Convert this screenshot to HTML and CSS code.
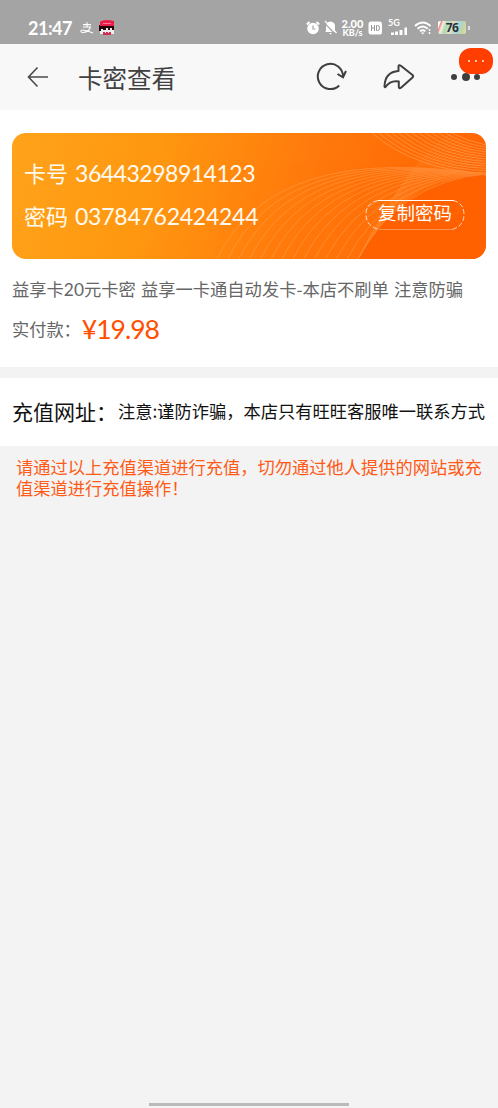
FILE: index.html
```html
<!DOCTYPE html>
<html lang="zh-CN">
<head>
<meta charset="utf-8">
<title>卡密查看</title>
<link rel="stylesheet" href="styles.css">
</head>
<body>
<div class="status">
  <span class="clock">21:47</span>
  <svg class="pay" width="14" height="12" viewBox="0 0 14 12" fill="none" stroke="#fff" stroke-width="1.1"><path d="M3 2.600h8M7 .3v4.500M3 5h7.500c-1 3-4 5.500-8 5.500-2 0-2.300-2.500 0-2.500 3 0 6 1.500 10.500 3"/></svg>
  <svg class="avatar" width="16" height="16" viewBox="0 0 16 16"><path fill="#eee" d="M1 8h14v6H1z"/><path fill="#26070c" d="M0 5h15v5h-2V8h-2v2H9V8H7v2H4V9H2v2H0z"/><path fill="#e91e4b" d="M2 1Q8-1 15 1v5H1V2z"/><path fill="#ff7595" d="M4 3h8v1H4z"/><path fill="#d52b50" d="M4 12h2v1h1v-1h2v1h1v-1h2v3H4z"/></svg>
  <span class="grow"></span>
  <svg class="alarm" width="14" height="14" viewBox="0 0 14 14"><circle cx="7" cy="7.500" r="5.800" fill="#fff"/><path d="M.8 3.500 3.500 1M13.200 3.500 10.500 1" stroke="#fff" stroke-width="2"/><path d="M7 4.500v3.500h2.500" fill="none" stroke="#a4a4a4" stroke-width="1.200"/></svg>
  <svg class="bell" width="13" height="15" viewBox="0 0 13 15"><path fill="#fff" d="M2 11V6q0-4 4.500-4.500Q11 2 11 6v5l1 1H1zM5 13h3l-1.500 1.500z"/><path d="M0 2.500 11 14" stroke="#a4a4a4" stroke-width="1.200"/><path d="M1 1 12.500 13" stroke="#fff" stroke-width="1.200"/></svg>
  <span class="speed"><b>2.00</b><b>KB/s</b></span>
  <svg class="hd" width="15" height="14" viewBox="0 0 15 14"><rect x=".5" y=".5" width="13.500" height="13" rx="2.500" fill="#fff"/><path d="M3.500 4v6M6.500 4v6M3.500 7h3M8.500 4.500h1q2 0 2 2.500t-2 2.500h-1z" fill="none" stroke="#999" stroke-width="1"/></svg>
  <span class="signal"><b>5G</b><svg width="22" height="16" viewBox="0 0 22 16" fill="#fff"><path d="M4 12.500h3V15H4zM8 11.500h3V15H8zM12.500 10h3v5h-3zM17.500 7.500h2.500V15h-2.500z"/></svg></span>
  <svg class="wifi" width="18" height="14" viewBox="0 0 18 14" fill="none" stroke="#fff" stroke-width="1.900"><path d="M1 5q8-7 15.500 0M3.500 7.700q5.200-4.600 10.300 0M6 10.300q2.700-2.300 5.400 0"/><path d="m7 11.500 1.700 2 1.700-2z" fill="#fff" stroke="none"/><path d="M15.500 8v2M15.500 11v2" stroke-width="1.500"/></svg>
  <span class="battery">76</span><i class="tip"></i>
</div>

<header class="nav">
  <svg class="back" width="22" height="22" viewBox="0 0 22 22" fill="none" stroke="#4b4b4b" stroke-width="1.600"><path d="M10.500 1.500 1.500 11l9 9.500M1.500 11H21"/></svg>
  <h1>卡密查看</h1>
  <svg class="reload" width="32" height="30" viewBox="0 0 32 30" fill="none" stroke="#3f3f3f" stroke-width="2"><path d="M23.200 23.500A12.600 12.600 0 1 1 27 14.500M21.500 12l5.500 3.300 3-6.300"/></svg>
  <svg class="share" width="32" height="28" viewBox="0 0 32 28" fill="none" stroke="#3f3f3f" stroke-width="2" stroke-linejoin="round"><path d="M15.500 3.500q.3-2 2-1L29.500 12q1.200 1.300 0 2.500L18 24.700q-2 1.300-2.200-.7V18.500C10 17.500 6 19 2.500 24q-1 .5-1-1C2 13 7 8.500 15.500 8z"/></svg>
  <div class="more"><i></i><i class="mid"></i><i></i><span class="badge"><i></i><i></i><i></i></span></div>
</header>

<main>
  <section class="order">
    <div class="card">
      <svg class="waves" width="474" height="126" viewBox="0 0 474 126" fill="none" aria-hidden="true">
        <path class="shade" d="M346 126Q387 49 474 41V126Z"/>
        <g id="arcs"></g><g id="fan"></g><g id="cross"></g>
      </svg>
      <div class="row"><span>卡号</span><span class="num">36443298914123</span></div>
      <div class="row"><span>密码</span><span class="num second">03784762424244</span></div>
      <button class="copy" type="button"><svg width="100" height="32" viewBox="0 0 100 32" fill="none" stroke="#fff"><path d="M13 1.500h76" stroke-width="1.200"/><path d="M13 1.500Q1 4 1 15.500T14 30.500M88 1.500Q99 4 99 15.500T87 30.500" stroke-width="1" stroke-dasharray="5 2" opacity=".75"/><path d="M14 30.500h73" opacity=".3"/></svg><span>复制密码</span></button>
    </div>
    <p class="product">益享卡<span class="lat">20</span>元卡密 益享一卡通自动发卡-本店不刷单 注意防骗</p>
    <p class="paid"><span>实付款：</span><strong>¥19.98</strong></p>
  </section>
  <section class="site"><span class="label">充值网址：</span><span class="notice">注意:谨防诈骗，本店只有旺旺客服唯一联系方式</span></section>
  <p class="warning">请通过以上充值渠道进行充值，切勿通过他人提供的网站或充<br>值渠道进行充值操作！</p>
</main>
<div class="home"></div>
<script src="waves.js"></script>
</body>
</html>
```
FILE: styles.css
```css
* { box-sizing: border-box; }
body { margin: 0; width: 498px; height: 1108px; overflow: hidden; display: flex; flex-direction: column; background: #f3f3f3; color: #111; font-family: "Noto Sans CJK SC", sans-serif; }
p, h1 { margin: 0; font-weight: 400; }
svg { display: block; flex: none; }
.status { height: 44px; flex: none; display: flex; align-items: center; padding: 11px 28px 0 28px; background: #a4a4a4; color: #fff; font-family: Lato, sans-serif; }
.clock { width: 52px; font-size: 18px; font-weight: 700; line-height: 20px; letter-spacing: -.5px; }
.avatar { margin-left: 5px; }
.grow { flex: 1; }
.bell { margin-left: 4px; }
.speed { width: 23px; margin-left: 4px; display: flex; flex-direction: column; font: 700 11px/9px Lato, sans-serif; text-align: center; white-space: nowrap; }
.speed b + b { font-size: 9px; }
.hd { margin-left: 4px; }
.signal { position: relative; margin-left: 4px; }
.signal b { position: absolute; left: 1px; top: -2px; font-size: 9px; line-height: 10px; }
.wifi { margin-left: 5px; }
.battery { width: 28px; height: 13px; margin-left: 6px; border-radius: 2px; background: linear-gradient(110deg, #fff 7%, #e98982 11%, #f7eedc 18%, #a9d9ba 30%, #e5dfbd 48%, #a9d4dd 68%, #c6d69b 87%, #e5dfbd); color: #27313d; font: 700 12px/13px "Open Sans", sans-serif; letter-spacing: -.6px; text-align: center; }
.tip { width: 2px; height: 4px; margin-left: 2px; background: #ddd; }
.nav { height: 66px; flex: none; display: flex; align-items: center; padding: 0 18px 0 27px; background: #f8f8f8; color: #414141; }
.nav h1 { width: 200px; margin-left: 29px; padding-top: 2px; font-size: 24.5px; line-height: 34px; }
.reload { margin-left: 38px; }
.share { margin-left: 35px; }
.more { position: relative; flex: none; display: flex; align-items: center; justify-content: space-between; width: 29px; height: 30px; margin-left: auto; }
.more > i { width: 6px; height: 6px; border-radius: 50%; background: #3f3f3f; }
.more > .mid { width: 8px; height: 8px; }
.badge { position: absolute; left: 8px; top: -14px; width: 34px; height: 26px; display: flex; align-items: center; justify-content: center; gap: 5px; border-radius: 12px; background: #ff3e00; }
.badge i { width: 2px; height: 2px; background: #ffc8ae; }
.order { height: 257px; padding: 23px 12px 0; background: #fff; }
.card { position: relative; height: 126px; padding: 19px 12px; border-radius: 14px; overflow: hidden; background: linear-gradient(105deg, #ffa31a 0%, #ff9710 30%, #ff780c 62%, #ff6303 100%); }
.waves { position: absolute; inset: 0; }
.waves g { stroke: #ffb06a; stroke-width: .9; }
.shade { fill: #ff6000; opacity: .8; }
#arcs { opacity: .42; }
#fan { opacity: .55; }
#cross { opacity: .25; }
.row { position: relative; display: flex; gap: 7px; height: 43px; line-height: 41px; color: #fffaf0; font-size: 22px; white-space: nowrap; }
.num { padding-top: 1px; font-family: Lato, sans-serif; font-size: 23px; letter-spacing: -.48px; }
.num.second { letter-spacing: -.25px; }
.copy { position: absolute; right: 21px; top: 66px; width: 100px; height: 32px; padding: 0 0 4px; border: 0; background: none; color: #fff; font: 400 18.5px/26px "Noto Sans CJK SC", sans-serif; }
.copy svg { position: absolute; inset: 0; }
.copy span { display: block; margin-top: -3px; }
.product { height: 26px; margin-top: 17px; color: #666; font-size: 17.3px; line-height: 26px; word-spacing: 1.3px; white-space: nowrap; }
.lat { font-family: Lato, sans-serif; }
.paid { display: flex; align-items: center; height: 34px; margin-top: 10px; color: #666; font-size: 17.2px; line-height: 34px; }
.paid strong { padding-left: 1px; color: #ff5000; font: 400 26.5px/34px Lato, sans-serif; letter-spacing: -1px; }
.site { display: flex; align-items: center; height: 68px; margin-top: 11px; padding: 0 12px 2px; background: #fff; white-space: nowrap; }
.label { width: 106px; font-size: 21px; line-height: 30px; }
.notice { font-size: 17.25px; line-height: 30px; }
.warning { padding: 10px 16px; color: #ff5a16; font-size: 17.25px; line-height: 21px; white-space: nowrap; }
.home { width: 200px; height: 3px; margin: auto auto 2px; background: #bababa; }
```
FILE: waves.js
```js
// Fills a group with curves evenly blended between two quadratic curves.
function blend(id, a, b, count) {
  const group = document.getElementById(id);
  for (let i = 0; i < count; i++) {
    const t = i / (count - 1);
    const p = a.map((v, k) => v + (b[k] - v) * t);
    const path = document.createElementNS('http://www.w3.org/2000/svg', 'path');
    path.setAttribute('d', `M${p[0]} ${p[1]}Q${p[2]} ${p[3]} ${p[4]} ${p[5]}`);
    group.appendChild(path);
  }
}
blend('arcs', [205, 126, 262, 8, 474, 42], [346, 126, 387, 49, 474, 41], 14);
blend('fan', [360, 0, 405, 38, 474, 40], [440, 0, 455, 8, 474, 12], 13);
blend('cross', [346, 126, 395, 30, 440, 0], [346, 126, 387, 49, 474, 30], 14);
```
